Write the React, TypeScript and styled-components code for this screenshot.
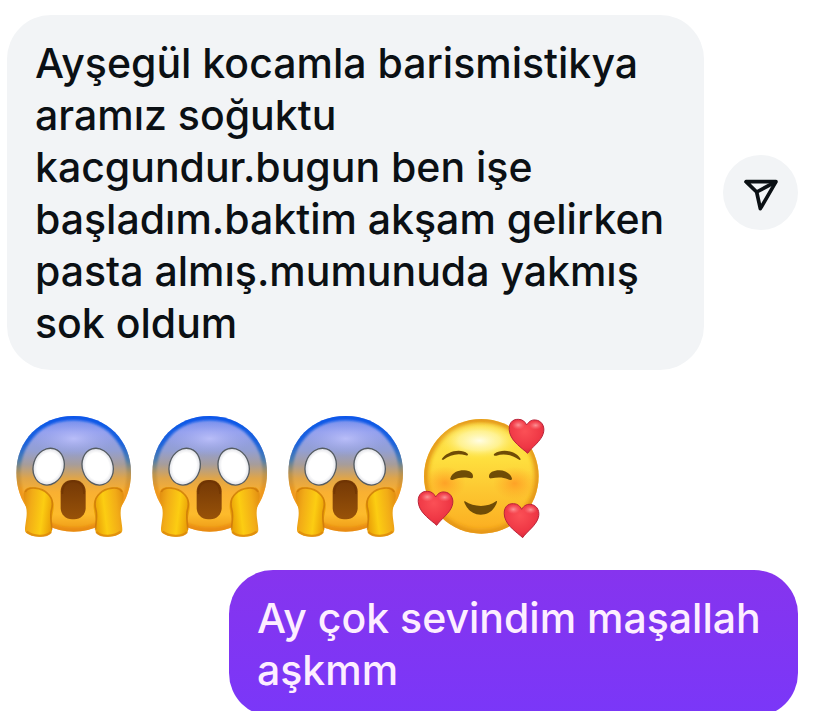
import React from "react";
import styled, { createGlobalStyle } from "styled-components";

const GlobalStyle = createGlobalStyle`
  *, *::before, *::after { box-sizing: border-box; }
  body {
    margin: 0;
    background: #ffffff;
    overflow: hidden;
    font-family: Inter, "Liberation Sans", sans-serif;
  }
`;

const Conversation = styled.main`
  display: flex;
  flex-direction: column;
  padding: 15px 18px 0 7px;
`;

const IncomingRow = styled.div`
  display: flex;
  align-items: center;
  gap: 19px;
`;

const OutgoingRow = styled.div`
  display: flex;
  justify-content: flex-end;
  margin-top: 24px;
`;

const Bubble = styled.p<{ $own?: boolean }>`
  margin: 0;
  flex: ${(p) => (p.$own ? "0 1 569px" : "1 1 0")};
  min-width: 0;
  padding: 22px 28px 21px;
  border-radius: 44px;
  font-size: 41px;
  line-height: 52px;
  font-weight: 540;
  color: ${(p) => (p.$own ? "#fdeeff" : "#0b1014")};
  background: ${(p) => (p.$own ? "linear-gradient(#8634ee, #7a37f8)" : "#f2f4f6")};
`;

const ShareButton = styled.button`
  display: flex;
  align-items: center;
  justify-content: center;
  flex: none;
  width: 75px;
  height: 75px;
  padding: 0;
  border: 0;
  border-radius: 50%;
  background: #f2f4f6;
  color: #0b1014;
  cursor: pointer;
`;

const EmojiRow = styled.div`
  display: flex;
  margin-top: 40px;
`;

const EmojiArt = styled.svg`
  display: block;
  width: 136px;
  height: 136px;
  margin-left: -2px;
  margin-right: 2px;
`;

function ShareIcon() {
  return (
    <svg width="36" height="36" viewBox="0 0 108 108" fill="none" stroke="currentColor" strokeWidth="11" strokeLinejoin="round" aria-hidden="true">
      <path d="M9 20H99L52 101L41 51Z" />
      <path d="M41 51L99 20" />
    </svg>
  );
}

const HEAD = "M221 48C322 48 393 122 393 218C393 320 318 395 221 395C124 395 49 320 49 218C49 122 120 48 221 48Z";

function Hand({ id }: { id: string }) {
  return (
    <>
      <path d="M71 291C69 266 82 259 101 261C130 264 153 281 160 306C165 325 155 347 154 370C154 383 160 391 152 400C140 414 91 413 77 397C71 390 81 358 80 337C80 320 73 309 71 291Z" fill={`url(#${id}-hand)`} />
      <path d="M76 276C84 257 125 262 143 281C158 294 160 311 154 331C149 350 156 373 155 389" fill="none" stroke="#c97409" strokeWidth="5" opacity="0.75" />
      <path d="M80 395C98 410 138 413 153 396" fill="none" stroke="#dc870b" strokeWidth="7" opacity="0.8" />
    </>
  );
}

function ScreamEmoji({ id }: { id: string }) {
  const u = (n: string) => `url(#${id}-${n})`;
  return (
    <EmojiArt viewBox="15 30 408 408" role="img" aria-label="Face screaming in fear">
      <defs>
        <linearGradient id={`${id}-face`} x1="0" y1="0" x2="0" y2="1">
          <stop offset="0" stopColor="#6f8bee" />
          <stop offset="0.14" stopColor="#929fee" />
          <stop offset="0.3" stopColor="#939fd2" />
          <stop offset="0.42" stopColor="#a79d9a" />
          <stop offset="0.54" stopColor="#e0a548" />
          <stop offset="0.66" stopColor="#f9b032" />
          <stop offset="0.85" stopColor="#fdbb2c" />
          <stop offset="1" stopColor="#ec9713" />
        </linearGradient>
        <linearGradient id={`${id}-rim`} gradientUnits="userSpaceOnUse" x1="0" y1="48" x2="0" y2="395">
          <stop offset="0" stopColor="#0857ea" />
          <stop offset="0.24" stopColor="#1c63dc" />
          <stop offset="0.38" stopColor="#4b7daf" />
          <stop offset="0.5" stopColor="#b5904e" stopOpacity="0.8" />
          <stop offset="0.65" stopColor="#ee9418" stopOpacity="0.8" />
          <stop offset="1" stopColor="#e7850b" stopOpacity="0.7" />
        </linearGradient>
        <radialGradient id={`${id}-shine`}>
          <stop offset="0" stopColor="#c6c8ff" stopOpacity="0.75" />
          <stop offset="1" stopColor="#a5aaf0" stopOpacity="0" />
        </radialGradient>
        <radialGradient id={`${id}-eye`}>
          <stop offset="0.75" stopColor="#ffffff" />
          <stop offset="1" stopColor="#dfe0e6" />
        </radialGradient>
        <linearGradient id={`${id}-mouth`} x1="0" y1="0" x2="0" y2="1">
          <stop offset="0" stopColor="#743806" />
          <stop offset="1" stopColor="#985208" />
        </linearGradient>
        <linearGradient id={`${id}-hand`} x1="0" y1="0" x2="1" y2="0.2">
          <stop offset="0" stopColor="#e08a10" />
          <stop offset="0.3" stopColor="#f2ac17" />
          <stop offset="0.7" stopColor="#fccd12" />
          <stop offset="1" stopColor="#eba208" />
        </linearGradient>
        <filter id={`${id}-soft`} x="-20%" y="-20%" width="140%" height="140%">
          <feGaussianBlur stdDeviation="3" />
        </filter>
        <clipPath id={`${id}-clip`}>
          <path d={HEAD} />
        </clipPath>
      </defs>
      <path d={HEAD} fill={u("face")} />
      <g clipPath={u("clip")}>
        <path d={HEAD} fill="none" stroke={u("rim")} strokeWidth="26" filter={u("soft")} />
        <ellipse cx="221" cy="116" rx="125" ry="52" fill={u("shine")} />
      </g>
      <g fill={u("eye")} stroke="#555c62" strokeWidth="4">
        <ellipse cx="146" cy="200" rx="46" ry="56" transform="rotate(18 146 200)" />
        <ellipse cx="293" cy="200" rx="46" ry="56" transform="rotate(-18 293 200)" />
      </g>
      <rect x="182" y="240" width="75" height="118" rx="34" fill={u("mouth")} />
      <path d="M187 282C187 255 201 244 220 244S252 255 252 282" fill="none" stroke="#693000" strokeWidth="5" opacity="0.5" />
      <Hand id={id} />
      <g transform="translate(442 0) scale(-1 1)">
        <Hand id={id} />
      </g>
    </EmojiArt>
  );
}

function Heart({ x, y }: { x: number; y: number }) {
  return (
    <g transform={`translate(${x} ${y})`}>
      <path d="M56 103C39 87 9 69 2 41C-4 14 10 0 28 1C41 1 48 8 53 18C60 6 71 0 85 4C101 9 108 25 103 43C96 67 69 84 56 103Z" fill="url(#love-heart)" stroke="#b9243a" strokeWidth="3" />
      <ellipse cx="28" cy="18" rx="20" ry="14" fill="url(#love-gloss)" />
      <ellipse cx="80" cy="19" rx="20" ry="13" fill="url(#love-gloss)" />
    </g>
  );
}

function LoveEmoji() {
  return (
    <EmojiArt viewBox="39 30 408 408" role="img" aria-label="Smiling face with hearts">
      <defs>
        <linearGradient id="love-face" x1="0" y1="0" x2="0" y2="1">
          <stop offset="0" stopColor="#fddc50" />
          <stop offset="0.35" stopColor="#fedf3e" />
          <stop offset="0.6" stopColor="#fdc932" />
          <stop offset="1" stopColor="#fbac20" />
        </linearGradient>
        <radialGradient id="love-shine">
          <stop offset="0" stopColor="#fffde4" />
          <stop offset="0.5" stopColor="#fff8a8" stopOpacity="0.75" />
          <stop offset="1" stopColor="#ffe83a" stopOpacity="0" />
        </radialGradient>
        <radialGradient id="love-blush">
          <stop offset="0" stopColor="#ff8b1f" stopOpacity="0.65" />
          <stop offset="1" stopColor="#ff9e22" stopOpacity="0" />
        </radialGradient>
        <radialGradient id="love-heart" cx="0.45" cy="0.35" r="0.7">
          <stop offset="0" stopColor="#fb5056" />
          <stop offset="0.7" stopColor="#ee3644" />
          <stop offset="1" stopColor="#d22438" />
        </radialGradient>
        <radialGradient id="love-gloss">
          <stop offset="0" stopColor="#ffb0b0" stopOpacity="0.75" />
          <stop offset="1" stopColor="#ff8085" stopOpacity="0" />
        </radialGradient>
        <filter id="love-soft" x="-20%" y="-20%" width="140%" height="140%">
          <feGaussianBlur stdDeviation="6" />
        </filter>
        <clipPath id="love-clip">
          <circle cx="244" cy="229" r="172" />
        </clipPath>
      </defs>
      <circle cx="244" cy="229" r="172" fill="url(#love-face)" />
      <g clipPath="url(#love-clip)">
        <circle cx="244" cy="229" r="170" fill="none" stroke="#e39413" strokeWidth="20" filter="url(#love-soft)" />
        <ellipse cx="238" cy="122" rx="125" ry="58" fill="url(#love-shine)" />
        <ellipse cx="135" cy="249" rx="62" ry="50" fill="url(#love-blush)" />
        <ellipse cx="344" cy="250" rx="65" ry="50" fill="url(#love-blush)" />
      </g>
      <g fill="#6f4c06">
        <path d="M125 178C139 155 181 143 203 161C206 164 202 168 197 166C173 158 151 164 129 180Z" />
        <path d="M283 161C310 144 349 154 362 177C362 181 358 180 355 178C334 164 311 159 289 167C283 169 279 165 283 161Z" />
        <path d="M151 235C157 216 177 210 194 211C211 212 220 221 219 230C218 237 211 234 203 233C187 231 173 234 160 239C154 241 150 239 151 235Z" />
        <path d="M267 231C266 218 280 211 298 211C316 211 333 222 336 236C336 241 329 241 324 238C310 231 291 231 275 235C271 236 268 235 267 231Z" />
        <path d="M195 304C221 322 264 323 288 304C293 301 291 307 289 312C279 334 263 344 242 344C219 344 203 329 195 312C192 306 191 302 195 304Z" />
      </g>
      <Heart x={327} y={57} />
      <Heart x={54} y={273} />
      <Heart x={312} y={310} />
    </EmojiArt>
  );
}

export default function App() {
  return (
    <>
      <GlobalStyle />
      <Conversation>
        <IncomingRow>
          <Bubble>
            Ayşegül kocamla barismistikya aramız soğuktu kacgundur.bugun ben işe
            başladım.baktim akşam gelirken pasta almış.mumunuda yakmış sok oldum
          </Bubble>
          <ShareButton type="button" aria-label="Share message">
            <ShareIcon />
          </ShareButton>
        </IncomingRow>
        <EmojiRow>
          <ScreamEmoji id="scream-a" />
          <ScreamEmoji id="scream-b" />
          <ScreamEmoji id="scream-c" />
          <LoveEmoji />
        </EmojiRow>
        <OutgoingRow>
          <Bubble $own>Ay çok sevindim maşallah aşkmm</Bubble>
        </OutgoingRow>
      </Conversation>
    </>
  );
}
